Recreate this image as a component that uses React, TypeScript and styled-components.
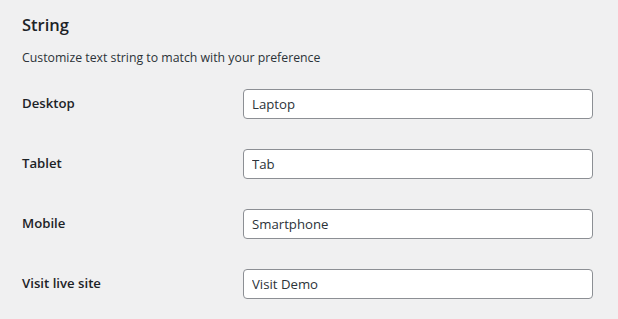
import React, { useState } from 'react';
import styled, { createGlobalStyle } from 'styled-components';

const fields = [
  { name: 'desktop', label: 'Desktop', value: 'Laptop' },
  { name: 'tablet', label: 'Tablet', value: 'Tab' },
  { name: 'mobile', label: 'Mobile', value: 'Smartphone' },
  { name: 'visit', label: 'Visit live site', value: 'Visit Demo' },
];

const App = () => {
  const [values, setValues] = useState<Record<string, string>>(
    Object.fromEntries(fields.map((f) => [f.name, f.value]))
  );

  const changeHandler = (event: React.ChangeEvent<HTMLInputElement>) => {
    const { name, value } = event.target;
    setValues((prev) => ({ ...prev, [name]: value }));
  };

  return (
    <>
      <GlobalStyle />
      <Wrapper>
        <Title>String</Title>
        <Description>Customize text string to match with your preference</Description>
        <Form>
          {fields.map((field) => (
            <Row key={field.name}>
              <Label htmlFor={field.name}>{field.label}</Label>
              <Input
                id={field.name}
                name={field.name}
                value={values[field.name]}
                onChange={changeHandler}
              />
            </Row>
          ))}
        </Form>
      </Wrapper>
    </>
  );
};

export default App;

const GlobalStyle = createGlobalStyle`
  body {
    margin: 0;
    background: #f0f0f1;
    color: #1d2327;
    font-family: "Open Sans", "Noto Sans", sans-serif;
  }
`;
const Wrapper = styled.article`
  padding: 14px 22px 0;
  display: flex;
  flex-direction: column;
`;
const Title = styled.h2`
  margin: 0;
  font-size: 16.5px;
  line-height: 22px;
  font-weight: 600;
  color: #1d2327;
`;
const Description = styled.p`
  margin: 12px 0 6px;
  font-size: 12.3px;
  line-height: 20px;
  color: #2c3338;
`;
const Form = styled.section`
  display: flex;
  flex-direction: column;
`;
const Row = styled.div`
  display: grid;
  grid-template-columns: 221px 350px;
  align-items: center;
  padding: 15px 0;
`;
const Label = styled.label`
  font-size: 13.2px;
  font-weight: 600;
  color: #1d2327;
  line-height: 1.3;
`;
const Input = styled.input`
  box-sizing: border-box;
  height: 30px;
  width: 350px;
  padding: 0 8px;
  font-family: inherit;
  font-size: 13.2px;
  color: #2c3338;
  background: #fff;
  border: 1px solid #8c8f94;
  border-radius: 4px;
  outline: none;
`;
